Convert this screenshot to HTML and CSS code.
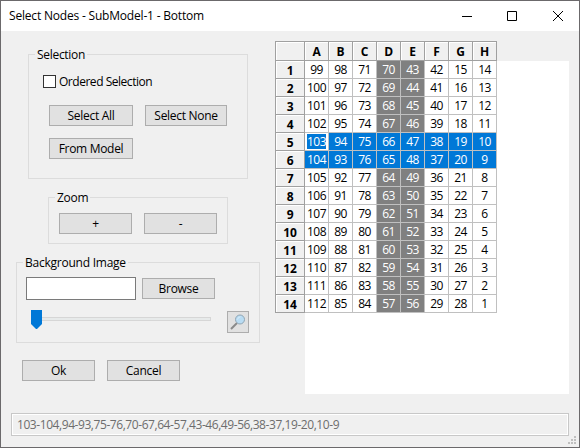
FILE: index.html
```html
<!DOCTYPE html>
<html lang="en">
<head>
<meta charset="utf-8">
<title>Select Nodes - SubModel-1 - Bottom</title>
<link rel="stylesheet" href="styles.css">
</head>
<body>
<div class="window">
  <header class="titlebar">
    <span class="title">Select Nodes - SubModel-1 - Bottom</span>
    <svg class="controls" width="104" height="12" viewBox="0 0 104 12" fill="none" stroke="#000">
      <path d="M0 6.500h10"/>
      <path d="M45.500 1.500h9v9h-9z"/>
      <path d="M91 1l10 10M101 1L91 11"/>
    </svg>
  </header>
  <main class="content">
    <div class="side">
      <section class="group selection">
        <h2 class="legend"><span>Selection</span></h2>
        <label class="check"><span class="box"></span><span class="check-label">Ordered Selection</span></label>
        <div class="row">
          <button class="btn wide">Select All</button>
          <button class="btn none">Select None</button>
        </div>
        <div class="row second"><button class="btn wide">From Model</button></div>
      </section>
      <section class="group zoom">
        <h2 class="legend"><span>Zoom</span></h2>
        <div class="row">
          <button class="btn">+</button>
          <button class="btn">-</button>
        </div>
      </section>
      <section class="group background">
        <h2 class="legend"><span>Background Image</span></h2>
        <div class="row file"><div class="field"></div><button class="btn">Browse</button></div>
        <div class="row slide">
          <div class="slider">
            <svg class="thumb" width="11" height="19" viewBox="0 0 11 19"><path d="M0 0h11v14L6 19H5L0 14z" fill="#0078d7"/></svg>
            <div class="track"></div>
          </div>
          <button class="btn icon">
            <svg width="16" height="16" viewBox="0 0 16 16">
              <path d="M1 15L7 9" stroke="#8a8a8a" stroke-width="2"/>
              <circle cx="10" cy="5.500" r="4.500" fill="#b9dcf3" stroke="#90a5b3"/>
              <path d="M7.500 5.500Q8 3 10.500 2.800" fill="none" stroke="#d9edf9"/>
            </svg>
          </button>
        </div>
      </section>
      <div class="row actions">
        <button class="btn">Ok</button>
        <button class="btn">Cancel</button>
      </div>
    </div>
    <div class="sheet">
      <div class="grid" id="grid"></div>
      <div class="canvas"></div>
    </div>
  </main>
  <footer class="status">
    <div class="status-text">103-104,94-93,75-76,70-67,64-57,43-46,49-56,38-37,19-20,10-9</div>
    <svg class="grip" width="8" height="8" viewBox="0 0 8 8" fill="#bfbfbf"><path d="M6 0h2v2H6zM3 3h2v2H3zM6 3h2v2H6zM0 6h2v2H0zM3 6h2v2H3zM6 6h2v2H6z"/></svg>
  </footer>
</div>
<script src="script.js"></script>
</body>
</html>
```

FILE: styles.css
```css
* { box-sizing: border-box; }
body {
  margin: 0;
  font: 12px/16px "Open Sans", "Noto Sans", sans-serif;
  letter-spacing: -0.3px;
  color: #000;
}
.window {
  width: 580px;
  height: 448px;
  border: 1px solid #6b696b;
  background: #f0f0f0;
  display: flex;
  flex-direction: column;
  position: relative;
}
.titlebar {
  height: 30px;
  background: #fff;
  display: flex;
  align-items: center;
  justify-content: space-between;
  padding: 0 13px 0 8px;
}
.title { letter-spacing: -0.19px; white-space: nowrap; }
.content { display: flex; height: 370px; }
.side { width: 274px; padding-top: 23px; }
.group { border: 1px solid #dcdcdc; }
.legend { margin: 0; height: 16px; margin-top: -8px; font-size: 12px; font-weight: 400; line-height: 16px; display: flex; }
.legend span { background: #f0f0f0; padding: 0 2px; margin-left: 6px; white-space: nowrap; }
.background .legend { letter-spacing: -0.24px; }
.row { display: flex; gap: 12px; }
.btn {
  width: 73px;
  height: 21px;
  padding: 0;
  border: 1px solid #adadad;
  border-radius: 0;
  background: #e1e1e1;
  font: inherit;
  line-height: 19px;
  letter-spacing: inherit;
  color: #000;
  text-align: center;
  white-space: nowrap;
}
.btn.wide { width: 84px; }
.btn.none { width: 82px; }
.btn.icon { width: 22px; height: 22px; display: flex; align-items: center; justify-content: center; }
.selection { width: 220px; height: 125px; margin-left: 27px; }
.check { display: flex; align-items: center; gap: 3px; height: 13px; margin: 12px 0 0 14px; }
.check-label { letter-spacing: -0.47px; }
.box { width: 13px; height: 13px; border: 1px solid #333; background: #fff; }
.selection .row { margin: 17px 0 0 20px; }
.selection .second { margin-top: 12px; }
.zoom { width: 180px; height: 47px; margin: 18px 0 0 47px; }
.zoom .row { margin: 7px 0 0 10px; }
.background { width: 244px; height: 81px; margin: 18px 0 0 15px; }
.file { gap: 6px; margin: 6px 0 0 9px; align-items: center; }
.field { width: 110px; height: 23px; border: 1px solid #7a7a7a; background: #fff; }
.slide { margin: 10px 0 0 14px; gap: 16px; align-items: flex-start; }
.slider { width: 180px; height: 19px; display: flex; align-items: flex-start; }
.thumb { display: block; }
.track { flex: 1; height: 4px; margin-top: 7px; border: 1px solid #d6d6d6; border-left: 0; background: #e7eaea; }
.icon { margin-top: 1px; }
.actions { margin: 17px 0 0 21px; }
.sheet { display: grid; padding-top: 10px; grid-template-columns: 294px; grid-template-rows: 353px; }
.grid, .canvas { grid-area: 1 / 1; }
.canvas { margin: 20px 0 0 30px; background: #fff; }
.grid {
  z-index: 1;
  width: 222px;
  height: 272px;
  display: grid;
  grid-template-columns: 29px repeat(8, 24px);
  grid-template-rows: 19px repeat(14, 18px);
  border-top: 1px solid #a0a0a0;
  border-left: 1px solid #a0a0a0;
}
.cell {
  border-right: 1px solid #c0c0c0;
  border-bottom: 1px solid #c0c0c0;
  background: #fff;
  text-align: center;
  line-height: 17px;
  font-size: 12px;
  letter-spacing: -0.5px;
}
.head {
  border-color: #a0a0a0;
  background: #f0f0f0;
  box-shadow: inset 1px 1px #fff;
  font-weight: 700;
  line-height: 19px;
  letter-spacing: -0.2px;
}
.gray { background: #808080; color: #fff; }
.blue { background: #0078d7; color: #fff; }
.edit { background: #fff; display: flex; justify-content: center; align-items: flex-start; }
.edit span { background: #0078d7; color: #fff; height: 15px; line-height: 15px; margin-top: 1px; }
.status { display: flex; margin: 12px 0 0 10px; }
.status-text {
  width: 558px;
  height: 23px;
  border: 1px solid #c8c8c8;
  box-shadow: inset 0 0 0 1px #fff;
  padding-left: 5px;
  line-height: 21px;
  color: #6d6d6d;
  letter-spacing: -0.43px;
}
.grip { position: absolute; right: 3px; bottom: 3px; }
```

FILE: script.js
```javascript
const grid = document.getElementById("grid");
const starts = [99, 98, 71, 70, 43, 42, 15, 14];

function addCell(text, className) {
  const cell = document.createElement("div");
  cell.className = "cell " + className;
  const label = document.createElement("span");
  label.textContent = text;
  cell.append(label);
  grid.append(cell);
}

["", ..."ABCDEFGH"].forEach((name) => addCell(name, "head"));
for (let row = 0; row < 14; row++) {
  addCell(row + 1, "head");
  starts.forEach((start, col) => {
    const value = col % 2 ? start - row : start + row;
    let state = "";
    if (row === 4 && col === 0) state = "edit";
    else if (row === 4 || row === 5) state = "blue";
    else if (col === 3 || col === 4) state = "gray";
    addCell(value, state);
  });
}
```
